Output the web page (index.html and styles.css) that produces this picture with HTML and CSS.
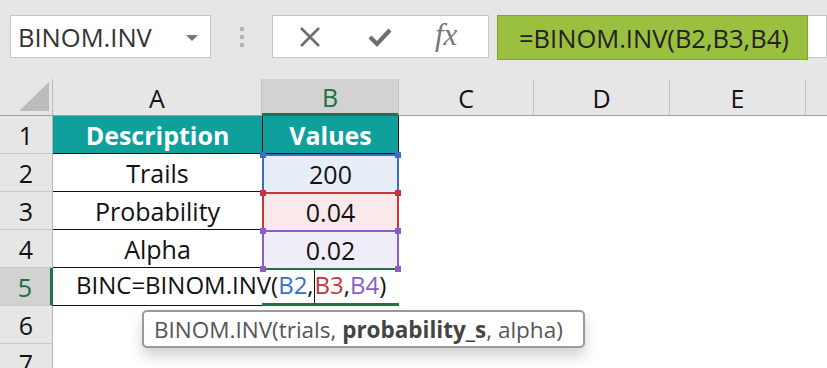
FILE: index.html
```html
<!DOCTYPE html>
<html lang="en">
<head>
    <meta charset="UTF-8">
    <title>BINOM.INV</title>
    <link rel="stylesheet" href="styles.css">
</head>
<body>

    <!-- Formula bar -->
    <div class="formula-bar">
        <div class="name-box">
            <span>BINOM.INV</span>
            <span class="drop-arrow"></span>
        </div>
        <div class="grip">
            <i></i><i></i><i></i>
        </div>
        <div class="bar-buttons">
            <svg class="icon" width="26" height="26" viewBox="0 0 26 26">
                <path d="M4 4 L22 22 M22 4 L4 22" stroke="#6e6e6e" stroke-width="2.6" fill="none"/>
            </svg>
            <svg class="icon" width="28" height="26" viewBox="0 0 28 26">
                <path d="M4 13 L11 20 L24 6" stroke="#6e6e6e" stroke-width="4.2" fill="none"/>
            </svg>
            <span class="fx">fx</span>
        </div>
        <div class="formula-input">
            <span class="formula-text">=BINOM.INV(B2,B3,B4)</span>
        </div>
    </div>

    <!-- Worksheet -->
    <div class="sheet">
        <div class="corner"><span class="select-all"></span></div>
        <div class="col-head">A</div>
        <div class="col-head active">B</div>
        <div class="col-head">C</div>
        <div class="col-head">D</div>
        <div class="col-head">E</div>
        <div class="col-head last"></div>

        <div class="row-head">1</div>
        <div class="cell th">Description</div>
        <div class="cell th th-b">Values</div>
        <div class="cell"></div><div class="cell"></div><div class="cell"></div><div class="cell"></div>

        <div class="row-head">2</div>
        <div class="cell label">Trails</div>
        <div class="cell range blue">200
            <span class="handle tl"></span><span class="handle tr"></span>
            <span class="handle bl"></span><span class="handle br"></span>
        </div>
        <div class="cell"></div><div class="cell"></div><div class="cell"></div><div class="cell"></div>

        <div class="row-head">3</div>
        <div class="cell label">Probability</div>
        <div class="cell range red">0.04
            <span class="handle tl"></span><span class="handle tr"></span>
            <span class="handle bl"></span><span class="handle br"></span>
        </div>
        <div class="cell"></div><div class="cell"></div><div class="cell"></div><div class="cell"></div>

        <div class="row-head">4</div>
        <div class="cell label">Alpha</div>
        <div class="cell range purple">0.02
            <span class="handle tl"></span><span class="handle tr"></span>
            <span class="handle bl"></span><span class="handle br"></span>
        </div>
        <div class="cell"></div><div class="cell"></div><div class="cell"></div><div class="cell"></div>

        <div class="row-head active">5</div>
        <div class="cell label editing"><span>BINC=BINOM.INV(<span class="ref-blue">B2</span>,<span class="caret"></span><span class="ref-red">B3</span>,<span class="ref-purple">B4</span>)</span></div>
        <div class="cell current"></div>
        <div class="cell"></div><div class="cell"></div><div class="cell"></div><div class="cell"></div>

        <div class="row-head">6</div>
        <div class="cell"></div><div class="cell"></div><div class="cell"></div><div class="cell"></div><div class="cell"></div><div class="cell"></div>

        <div class="row-head">7</div>
        <div class="cell"></div><div class="cell"></div><div class="cell"></div><div class="cell"></div><div class="cell"></div><div class="cell"></div>

        <!-- Function tooltip -->
        <div class="tooltip"><span>BINOM.INV(trials, <b>probability_s</b>, alpha)</span></div>
    </div>

</body>
</html>
```

FILE: styles.css
```css
/* General styling */
* {
    margin: 0;
    padding: 0;
    box-sizing: border-box;
}

body {
    background-color: #e6e6e6;
    font-family: "Open Sans", Arial, sans-serif;
    width: 827px;
    height: 368px;
    overflow: hidden;
}

/* Formula bar */
.formula-bar {
    display: flex;
    align-items: flex-start;
    height: 79px;
    padding: 15px 0 0 10px;
}

.name-box {
    display: flex;
    justify-content: space-between;
    align-items: center;
    width: 201px;
    height: 43px;
    background-color: white;
    border: 1px solid #c6c6c6;
    padding: 0 12px 0 7px;
    font-size: 25.5px;
    color: #333;
}

.drop-arrow {
    width: 0;
    height: 0;
    border-left: 6px solid transparent;
    border-right: 6px solid transparent;
    border-top: 6px solid #777;
    margin-top: 2px;
}

.grip {
    display: flex;
    flex-direction: column;
    gap: 4px;
    width: 61px;
    align-items: center;
    padding-top: 12px;
}

.grip i {
    display: block;
    width: 4px;
    height: 4px;
    background-color: #b4b4b4;
}

.bar-buttons {
    display: flex;
    align-items: center;
    width: 217px;
    height: 43px;
    background-color: white;
    border: 1px solid #c6c6c6;
    padding-left: 24px;
    gap: 43px;
}

.fx {
    font-family: "Liberation Serif", serif;
    font-style: italic;
    font-size: 31px;
    color: #777;
    margin-left: -2px;
    margin-top: -4px;
}

.formula-input {
    flex-grow: 1;
    height: 43px;
    margin-left: 8px;
    background-color: white;
    border: 1px solid #c6c6c6;
    border-left: none;
}

.formula-text {
    display: flex;
    align-items: center;
    width: 311px;
    height: 45px;
    margin-top: -1px;
    background-color: #9bc03f;
    border: 1px solid #7ea52b;
    padding-left: 21px;
    font-size: 25.5px;
    color: #222;
}

/* Worksheet grid */
.sheet {
    position: relative;
    display: grid;
    grid-template-columns: 53px 209px 137px 135px 136px 136px 1fr;
    grid-template-rows: 37px repeat(6, 38px) 38px;
    background-color: white;
    font-size: 25px;
    color: #111;
}

.corner {
    position: relative;
    background-color: #e6e6e6;
    border-right: 1px solid #bdbdbd;
    border-bottom: 1px solid #9e9e9e;
}

.select-all {
    position: absolute;
    right: 3px;
    bottom: 4px;
    width: 0;
    height: 0;
    border-left: 30px solid transparent;
    border-bottom: 29px solid #bcbcbc;
}

.col-head {
    display: flex;
    justify-content: center;
    align-items: center;
    background-color: #e6e6e6;
    border-right: 1px solid #c2c2c2;
    border-bottom: 1px solid #9e9e9e;
    font-size: 25px;
    padding-top: 2px;
}

.col-head.active {
    background-color: #d2d2d2;
    color: #1e6e42;
    border-bottom: 3px solid #217346;
}

.col-head.last {
    border-right: none;
}

.row-head {
    display: flex;
    justify-content: center;
    align-items: center;
    background-color: #e6e6e6;
    border-right: 1px solid #b4b4b4;
    border-bottom: 1px solid #c8c8c8;
    font-size: 25px;
}

.row-head.active {
    background-color: #d2d2d2;
    color: #1e6e42;
    border-right: 3px solid #217346;
}

.cell {
    display: flex;
    justify-content: center;
    align-items: center;
    white-space: nowrap;
}

.th {
    background-color: #0fa09c;
    color: white;
    font-weight: bold;
    border-bottom: 1px solid #111;
}

.th-b {
    border-left: 1px solid #111;
    border-right: 1px solid #111;
}

.label {
    border-bottom: 1px solid #111;
}

/* Referenced ranges */
.range {
    position: relative;
    border-top: 2px solid;
    border-left: 2px solid;
    border-right: 2px solid;
}

.range.blue {
    border-color: #3b6fc6;
    background-color: #e8eef8;
}

.range.red {
    border-color: #c6343d;
    background-color: #f9e9ea;
}

.range.purple {
    border-color: #8a5ec3;
    background-color: #f0ecf8;
}

.handle {
    position: absolute;
    width: 6px;
    height: 6px;
}

.blue .handle { background-color: #3b6fc6; }
.red .handle { background-color: #c6343d; }
.purple .handle { background-color: #8a5ec3; }

.handle.tl { top: -4px; left: -4px; }
.handle.tr { top: -4px; right: -4px; }
.handle.bl { bottom: -4px; left: -4px; }
.handle.br { bottom: -4px; right: -4px; }

/* Cell being edited */
.editing {
    justify-content: flex-start;
    padding-left: 23px;
    overflow: visible;
    font-size: 24px;
}

.current {
    border-top: 2px solid #217346;
    border-bottom: 3px solid #217346;
    background-color: transparent;
}

.ref-blue { color: #3b6fc6; }
.ref-red { color: #c6343d; }
.ref-purple { color: #8a5ec3; }

.caret {
    display: inline-block;
    width: 1px;
    height: 36px;
    background-color: #111;
    vertical-align: middle;
}

.tooltip {
    position: absolute;
    left: 142px;
    top: 231px;
    width: 443px;
    height: 38px;
    display: flex;
    align-items: center;
    padding-left: 10px;
    background-color: white;
    border: 2px solid #999;
    border-radius: 5px;
    box-shadow: 0 8px 14px rgba(0, 0, 0, 0.18);
    font-size: 22.5px;
    color: #555;
    white-space: nowrap;
}

.tooltip b {
    color: #444;
}
```
